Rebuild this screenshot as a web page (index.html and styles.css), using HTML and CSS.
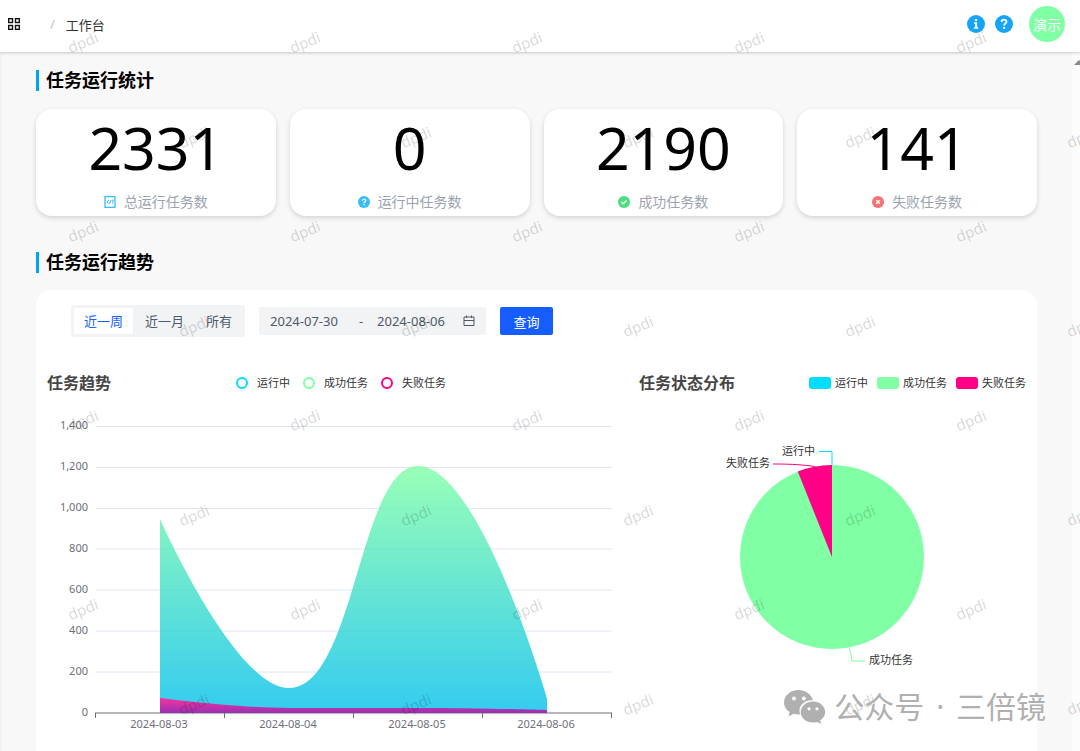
FILE: index.html
```html
<!DOCTYPE html>
<html lang="zh-CN">
<head>
  <meta charset="UTF-8">
  <meta name="viewport" content="width=device-width, initial-scale=1">
  <title>工作台</title>
  <link rel="stylesheet" href="styles.css">
</head>
<body>
  <header class="topbar">
    <button type="button" class="icon-btn" aria-label="菜单">
      <svg width="12" height="12" viewBox="0 0 12 12" fill="none" stroke="#111" stroke-width="1.4">
        <rect x="0.7" y="0.7" width="3.8" height="3.8"/>
        <rect x="7.5" y="0.7" width="3.8" height="3.8"/>
        <rect x="0.7" y="7.5" width="3.8" height="3.8"/>
        <rect x="7.5" y="7.5" width="3.8" height="3.8"/>
      </svg>
    </button>
    <nav class="breadcrumb"><span class="slash">/</span><a href="#">工作台</a></nav>
    <div class="topbar-right">
      <button type="button" class="icon-btn" aria-label="信息">
        <svg width="18" height="18" viewBox="0 0 18 18">
          <circle cx="9" cy="9" r="9" fill="#14a5fb"/>
          <path d="M7.9 4h2.2v2H7.9zM7 7.3h3.1v4.9h1.1v1.5H6.9v-1.5h1.2V8.8H7z" fill="#fff"/>
        </svg>
      </button>
      <button type="button" class="icon-btn" aria-label="帮助">
        <svg width="18" height="18" viewBox="0 0 18 18">
          <circle cx="9" cy="9" r="9" fill="#14a5fb"/>
          <path d="M6.6 6.9c0-3 4.9-2.9 4.9-.2 0 1.7-2.4 1.8-2.4 3.8" fill="none" stroke="#fff" stroke-width="1.8"/>
          <rect x="8.1" y="11.9" width="2" height="2" fill="#fff"/>
        </svg>
      </button>
      <button type="button" class="avatar">演示</button>
    </div>
  </header>

  <main class="content">
    <h2 class="section-title">任务运行统计</h2>
    <div class="stats">
      <div class="stat-card">
        <div class="stat-value">2331</div>
        <div class="stat-label">
          <svg width="12" height="12" viewBox="0 0 12 12" fill="none" stroke="#38bdf8">
            <rect x="1" y="0.6" width="10" height="10.8" stroke-width="1.3"/>
            <path d="M4.6 4.2L2.9 6l1.7 1.8M6.9 4L5.600 8M7.600 4.200h1.600L8.500 7.600" stroke-width="1"/>
          </svg>
          <span>总运行任务数</span>
        </div>
      </div>
      <div class="stat-card">
        <div class="stat-value">0</div>
        <div class="stat-label">
          <svg width="12" height="12" viewBox="0 0 12 12">
            <circle cx="6" cy="6" r="6" fill="#38bdf8"/>
            <path d="M4.4 4.7c0-2 3.3-1.9 3.3-.1 0 1.1-1.6 1.2-1.6 2.5" fill="none" stroke="#fff" stroke-width="1.2"/>
            <rect x="5.4" y="7.9" width="1.4" height="1.3" fill="#fff"/>
          </svg>
          <span>运行中任务数</span>
        </div>
      </div>
      <div class="stat-card">
        <div class="stat-value">2190</div>
        <div class="stat-label">
          <svg width="12" height="12" viewBox="0 0 12 12">
            <circle cx="6" cy="6" r="6" fill="#4ade80"/>
            <path d="M3.4 6l1.9 1.8 3.4-3.4" fill="none" stroke="#fff" stroke-width="1.3"/>
          </svg>
          <span>成功任务数</span>
        </div>
      </div>
      <div class="stat-card">
        <div class="stat-value">141</div>
        <div class="stat-label">
          <svg width="12" height="12" viewBox="0 0 12 12">
            <circle cx="6" cy="6" r="6" fill="#f87171"/>
            <path d="M4.2 4.2l3.6 3.6M7.8 4.2L4.2 7.8" stroke="#fff" stroke-width="1.5"/>
          </svg>
          <span>失败任务数</span>
        </div>
      </div>
    </div>

    <h2 class="section-title">任务运行趋势</h2>
    <section class="panel">
      <form class="filters">
        <div class="segmented">
          <label><input type="radio" name="range" checked><span>近一周</span></label>
          <label><input type="radio" name="range"><span>近一月</span></label>
          <label><input type="radio" name="range"><span>所有</span></label>
        </div>
        <div class="date-range">
          <input type="text" value="2024-07-30" aria-label="开始日期">
          <span class="dash">-</span>
          <input type="text" value="2024-08-06" aria-label="结束日期">
          <svg width="12" height="12" viewBox="0 0 12 12" fill="none" stroke="#4e5969">
            <path d="M1 2h10v8.5H1zM1 5.5h10M3.5 0.5V3M8.5 0.5V3"/>
          </svg>
        </div>
        <button type="button" class="query-btn">查询</button>
      </form>

      <div class="charts">
        <div class="chart trend">
          <div class="chart-head">
            <h3>任务趋势</h3>
            <ul class="legend rings">
              <li><i class="mark cyan"></i>运行中</li>
              <li><i class="mark green"></i>成功任务</li>
              <li><i class="mark pink"></i>失败任务</li>
            </ul>
          </div>
          <svg class="plot" viewBox="0 0 588 345">
            <defs>
              <linearGradient id="okFill" x1="0" y1="0" x2="0" y2="1">
                <stop offset="0" stop-color="#80ffa5"/>
                <stop offset="1" stop-color="#01bfec"/>
              </linearGradient>
              <linearGradient id="failFill" x1="0" y1="0" x2="0" y2="1">
                <stop offset="0" stop-color="#f7339f"/>
                <stop offset="1" stop-color="#9a30b1"/>
              </linearGradient>
            </defs>
            <path class="grid-line" d="M49 31.5H565M49 72.5H565M49 113.5H565M49 154H565M49 195H565M49 236H565M49 277H565"/>
            <g class="axis-text y-text">
              <text x="41" y="34">1,400</text>
              <text x="41" y="75">1,200</text>
              <text x="41" y="116">1,000</text>
              <text x="41" y="157">800</text>
              <text x="41" y="198">600</text>
              <text x="41" y="239">400</text>
              <text x="41" y="280">200</text>
              <text x="41" y="321">0</text>
            </g>
            <path class="axis-line" d="M48 318H565M48.5 318v5M177.5 318v5M306.5 318v5M435.5 318v5M564.5 318v5"/>
            <!-- 成功任务 -->
            <path d="M113 124C113 124 188 293 242 293C308 293 312 71 371 71C433 71 500 303 500 303V318H113Z" fill="url(#okFill)" opacity="0.8"/>
            <!-- 失败任务 -->
            <path d="M113 303C113 303 190 313 242 313C300 313 320 313 371 313C430 313 500 315 500 315V318H113Z" fill="url(#failFill)"/>
            <g class="axis-text x-text">
              <text x="112" y="333">2024-08-03</text>
              <text x="241" y="333">2024-08-04</text>
              <text x="370" y="333">2024-08-05</text>
              <text x="499" y="333">2024-08-06</text>
            </g>
          </svg>
        </div>

        <div class="chart share">
          <div class="chart-head">
            <h3>任务状态分布</h3>
            <ul class="legend blocks">
              <li><i class="mark cyan"></i>运行中</li>
              <li><i class="mark green"></i>成功任务</li>
              <li><i class="mark pink"></i>失败任务</li>
            </ul>
          </div>
          <svg class="plot" viewBox="0 0 387 345">
            <circle cx="193" cy="162" r="92" fill="#80ffa5"/>
            <path d="M193 162V70A92 92 0 0 0 158.8 76.6Z" fill="#ff0087"/>
            <g fill="none">
              <path d="M193 70V56.5H180" stroke="#00ddff"/>
              <path d="M176 71.5C165 70 155 69 134 69" stroke="#ff0087"/>
              <path d="M210.5 253L213 266H226" stroke="#80ffa5"/>
            </g>
            <g class="pie-text">
              <text x="143" y="60">运行中</text>
              <text x="87" y="72">失败任务</text>
              <text x="230" y="269">成功任务</text>
            </g>
          </svg>
        </div>
      </div>
    </section>
  </main>

  <div class="scroll-track">
    <svg width="8" height="5" viewBox="0 0 8 5"><path d="M2 5L7 0L12 5Z" fill="#8a8a8a"/></svg>
  </div>

  <div class="watermark" aria-hidden="true">
    <span>dpdi</span><span>dpdi</span><span>dpdi</span><span>dpdi</span><span>dpdi</span>
    <span>dpdi</span><span>dpdi</span><span>dpdi</span><span>dpdi</span><span>dpdi</span>
    <span>dpdi</span><span>dpdi</span><span>dpdi</span><span>dpdi</span><span>dpdi</span>
    <span>dpdi</span><span>dpdi</span><span>dpdi</span><span>dpdi</span><span>dpdi</span>
  </div>
  <div class="watermark shifted" aria-hidden="true">
    <span>dpdi</span><span>dpdi</span><span>dpdi</span><span>dpdi</span><span>dpdi</span>
    <span>dpdi</span><span>dpdi</span><span>dpdi</span><span>dpdi</span><span>dpdi</span>
    <span>dpdi</span><span>dpdi</span><span>dpdi</span><span>dpdi</span><span>dpdi</span>
    <span>dpdi</span><span>dpdi</span><span>dpdi</span><span>dpdi</span><span>dpdi</span>
  </div>

  <div class="account">
    <svg width="42" height="34" viewBox="0 0 42 34">
      <path d="M14.5 0C6.5 0 0 5.5 0 12.5c0 4 2.2 7.3 5.6 9.6L4.7 26.2l5-2.5c1.5.4 3.2.7 5 .7h1.5c-3-8 4-14.6 12.8-14C27.5 4.3 21.5 0 14.5 0z" fill="#b0b0b0"/>
      <path d="M29 11.4c-7 0-12.3 4.8-12.3 10.6S22 32.5 29 32.5c1.5 0 2.9-.2 4.2-.6l4 2.1-1-3.5c3-2 5-5 5-8.5 0-5.8-5.2-10.6-12.2-10.6z" fill="#b0b0b0"/>
      <g fill="#fff">
        <circle cx="10" cy="8.5" r="1.9"/>
        <circle cx="19.8" cy="8.5" r="1.9"/>
        <circle cx="25" cy="18.8" r="1.6"/>
        <circle cx="33" cy="18.8" r="1.6"/>
      </g>
    </svg>
    <span>公众号 <span class="dot">·</span> 三倍镜</span>
  </div>
</body>
</html>
```

FILE: styles.css
```css
* {
  box-sizing: border-box;
}

body {
  position: relative;
  display: flex;
  flex-direction: column;
  height: 100vh;
  margin: 0;
  overflow: hidden;
  background: #f8f8f8;
  box-shadow: inset 3px 0 3px -2px rgba(0, 0, 0, 0.05);
  font-family: "Noto Sans", "Noto Sans CJK SC", sans-serif;
  font-size: 13px;
  color: #000;
}

button,
input {
  font: inherit;
}

h2,
h3,
ul {
  margin: 0;
  padding: 0;
}

/* 顶部栏 */
.topbar {
  z-index: 1;
  display: flex;
  flex: none;
  align-items: center;
  height: 52px;
  padding: 0 15px 4px 8px;
  background: #fff;
  box-shadow: 0 1px 3px rgba(0, 0, 0, 0.2);
}

.icon-btn {
  display: flex;
  padding: 0;
  border: none;
  background: none;
}

.breadcrumb {
  display: flex;
  gap: 11px;
  margin-left: 30px;
}

.breadcrumb a {
  color: #333;
  text-decoration: none;
}

.slash {
  color: #c0c4cc;
}

.topbar-right {
  display: flex;
  align-items: center;
  gap: 10px;
  margin-left: auto;
}

.avatar {
  width: 36px;
  height: 36px;
  margin-left: 6px;
  padding: 0;
  border: none;
  border-radius: 50%;
  background: #80ffa5;
  color: #fff;
  font-size: 14px;
}

/* 内容区 */
.content {
  display: flex;
  flex: 1;
  flex-direction: column;
  min-height: 0;
  padding: 18px 43px 0 36px;
}

.section-title {
  flex: none;
  padding-left: 7px;
  border-left: 3px solid #00a6ed;
  font-size: 18px;
  line-height: 21px;
}

.stats {
  display: grid;
  grid-template-columns: repeat(4, 1fr);
  gap: 14px;
  margin: 18px 0 36px;
}

.stat-card {
  height: 107px;
  border-radius: 16px;
  background: #fff;
  box-shadow: 0 2px 5px rgba(0, 0, 0, 0.15);
  text-align: center;
}

.stat-value {
  font-size: 59px;
  line-height: 76px;
}

.stat-label {
  display: flex;
  align-items: center;
  justify-content: center;
  gap: 8px;
  padding-top: 7px;
  color: #9ca3af;
  font-size: 14px;
  line-height: 20px;
}

.panel {
  flex: 1;
  margin-top: 17px;
  padding-top: 15px;
  border-radius: 16px 16px 0 0;
  background: #fff;
}

/* 筛选条件 */
.filters {
  display: flex;
  align-items: center;
  gap: 14px;
  padding-left: 35px;
}

.segmented {
  display: flex;
  gap: 2px;
  padding: 3px;
  border-radius: 2px;
  background: #f2f3f5;
  color: #4e5969;
}

.segmented label {
  position: relative;
}

.segmented input {
  position: absolute;
  opacity: 0;
}

.segmented span {
  display: block;
  padding: 0 10px;
  border-radius: 2px;
  line-height: 26px;
}

.segmented input:checked + span {
  background: #fff;
  color: #165dff;
}

.date-range {
  display: flex;
  align-items: center;
  height: 28px;
  padding: 0 11px;
  border-radius: 2px;
  background: #f2f3f5;
  color: #4e5969;
}

.date-range input {
  width: 86px;
  padding: 0;
  border: none;
  background: none;
  color: inherit;
}

.date-range .dash {
  width: 21px;
  padding-left: 3px;
}

.query-btn {
  width: 53px;
  height: 28px;
  padding: 0;
  border: none;
  border-radius: 2px;
  background: #165dff;
  color: #fff;
}

/* 图表 */
.charts {
  display: grid;
  grid-template-columns: 599fr 402fr;
  margin-top: 34px;
}

.trend {
  padding-left: 11px;
}

.share {
  padding: 0 11px 0 4px;
}

.chart-head {
  display: grid;
  grid-template-columns: 1fr auto 1fr;
  align-items: center;
  height: 24px;
}

.share .chart-head {
  grid-template-columns: 1fr auto;
}

.chart-head h3 {
  color: #464646;
  font-size: 16px;
  line-height: 24px;
}

.legend {
  display: flex;
  gap: 9px;
  color: #333;
  font-size: 11px;
  line-height: 20px;
  list-style: none;
}

.legend li {
  display: flex;
  align-items: center;
  gap: 4px;
}

.legend .mark {
  width: 22px;
  height: 12px;
  border-radius: 3px;
  background: currentColor;
}

.rings {
  gap: 13px;
}

.rings li {
  gap: 9px;
}

.rings .mark {
  width: 12px;
  border: 2px solid;
  border-radius: 50%;
  background: #fff;
}

.cyan {
  color: #00ddff;
}

.green {
  color: #80ffa5;
}

.pink {
  color: #ff0087;
}

.plot {
  display: block;
  width: 100%;
}

.grid-line {
  stroke: #e0e6f1;
}

.axis-line {
  fill: none;
  stroke: #6e7079;
}

.axis-text {
  fill: #6e7079;
  font-size: 11px;
}

.y-text {
  text-anchor: end;
}

.x-text {
  text-anchor: middle;
}

.pie-text {
  fill: #333;
  font-size: 11px;
}

/* 滚动条 */
.scroll-track {
  position: absolute;
  top: 52px;
  right: 0;
  bottom: 0;
  width: 8px;
  padding-top: 8px;
  background: #fcfcfc;
}

.scroll-track svg {
  display: block;
}

/* 水印 */
.watermark {
  position: absolute;
  z-index: 2;
  inset: 0;
  display: grid;
  grid-template-columns: repeat(5, 222px);
  grid-auto-rows: 189px;
  overflow: hidden;
  color: rgba(0, 0, 0, 0.17);
  font-size: 15px;
  pointer-events: none;
}

.watermark span {
  justify-self: start;
  align-self: start;
  margin: 32px 0 0 67px;
  line-height: 20px;
  transform: rotate(-22deg);
}

.watermark.shifted {
  padding: 95px 0 0 111px;
}

/* 公众号 */
.account {
  position: absolute;
  z-index: 3;
  right: 34px;
  bottom: 22px;
  display: flex;
  align-items: center;
  gap: 8px;
  color: #b0b0b0;
  font-size: 30px;
  line-height: 44px;
}

.account .dot {
  margin: 0 4px;
}
```
